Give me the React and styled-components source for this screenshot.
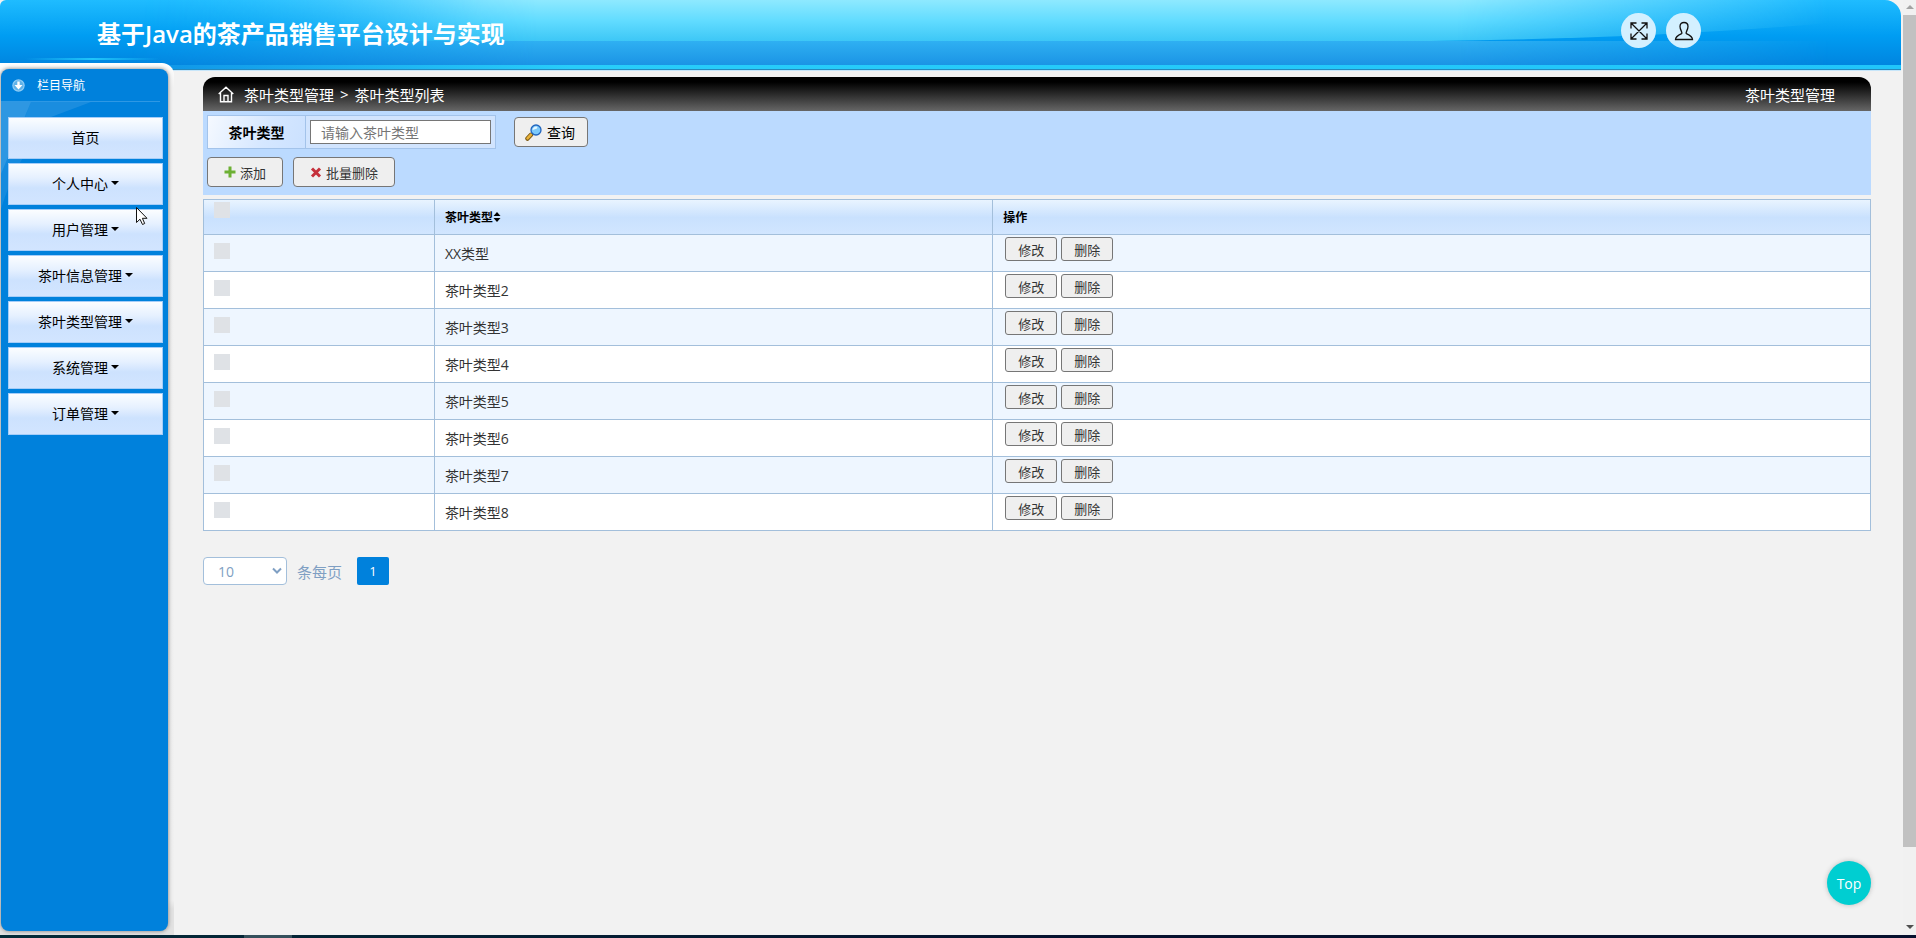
import React from "react";
import styled, { createGlobalStyle, css } from "styled-components";

const GlobalStyle = createGlobalStyle`
  *, *::before, *::after { box-sizing: border-box; }
  body {
    margin: 0;
    background: #f2f2f2;
    color: #000;
    font-family: "Open Sans", "Noto Sans CJK SC", sans-serif;
    font-size: 14px;
  }
  button, input, select { font-family: inherit; margin: 0; }
`;

const Screen = styled.div`
  display: flex;
  flex-direction: column;
  height: 100vh;
`;

const Viewport = styled.div`
  display: flex;
  flex: 1;
  min-height: 0;
`;

const Page = styled.div`
  position: relative;
  display: flex;
  flex-direction: column;
  flex: 1;
  min-width: 0;
`;

const Header = styled.header`
  position: relative;
  display: flex;
  align-items: flex-start;
  justify-content: space-between;
  height: 71px;
  margin-right: 2px;
  padding: 0 200px 0 97px;
  border-radius: 6px 16px 0 0;
  overflow: hidden;
  flex: none;
`;

const HeaderArt = styled.svg`
  position: absolute;
  inset: 0;
  width: 100%;
  height: 100%;
`;

const Title = styled.h1`
  position: relative;
  margin: 0;
  color: #fff;
  font-size: 24px;
  line-height: 68px;
  font-weight: 700;
`;

const Latin = styled.span`
  font-weight: 600;
`;

const HeaderActions = styled.div`
  position: relative;
  display: flex;
  gap: 10px;
  padding-top: 13px;
`;

const RoundButton = styled.button`
  display: flex;
  align-items: center;
  justify-content: center;
  width: 35px;
  height: 35px;
  padding: 0;
  border: 0;
  border-radius: 50%;
  background: #d3f0ff;
  color: #111;
`;

const Body = styled.div`
  display: flex;
  flex: 1;
  min-height: 0;
`;

const SidebarFrame = styled.aside`
  position: relative;
  display: flex;
  width: 174px;
  margin-top: -8px;
  padding: 6px 6px 4px 1px;
  border-radius: 0 12px 0 0;
  background: linear-gradient(#fff, #f2f2f2 24px, #f0f0f0 96%, #e2e2e2 97%);
  flex: none;
`;

const Sidebar = styled.div`
  position: relative;
  flex: 1;
  border-radius: 8px;
  overflow: hidden;
  background: #0081dc;
  box-shadow: 0 0 4px #777;
`;

const SidebarArt = styled.svg`
  position: absolute;
  top: 0;
  left: 0;
`;

const SidebarHeading = styled.h2`
  position: relative;
  display: flex;
  align-items: center;
  gap: 12px;
  height: 33px;
  margin: 0 8px 15px 0;
  padding-left: 11px;
  border-bottom: 1px solid #2e98e4;
  color: #fff;
  font-size: 12px;
  font-weight: 400;
`;

const NavList = styled.ul`
  position: relative;
  display: flex;
  flex-direction: column;
  gap: 4px;
  margin: 0;
  padding: 0 5px 0 7px;
  list-style: none;
`;

const NavButton = styled.button`
  display: flex;
  align-items: center;
  justify-content: center;
  gap: 3px;
  width: 100%;
  height: 42px;
  padding: 0 0 2px;
  border: 1px solid #a5cdf8;
  background: linear-gradient(#fbfdff, #e5f0ff 35%, #cde2fe 60%, #d2e5ff);
  color: #000;
  font-size: 14px;
`;

const Caret = styled.span`
  border: 4px solid transparent;
  border-top-color: currentColor;
  border-bottom: 0;
`;

const Main = styled.main`
  flex: 1;
  min-width: 0;
  padding: 6px 32px 0 29px;
`;

const Breadcrumb = styled.nav`
  display: flex;
  align-items: center;
  gap: 6px;
  height: 34px;
  padding: 0 36px 0 15px;
  border-radius: 12px 12px 0 0;
  background: linear-gradient(#000 15%, #666);
  color: #fff;
  font-size: 15px;

  svg { margin-right: 4px; }
`;

const CrumbLink = styled.a`
  color: inherit;
  text-decoration: none;
`;

const PageName = styled.span`
  margin-left: auto;
`;

const Toolbar = styled.section`
  display: flex;
  flex-direction: column;
  gap: 8px;
  height: 84px;
  padding: 4px;
  background: #bbdaff;
`;

const ToolRow = styled.div`
  display: flex;
  align-items: center;
  gap: ${(p) => p.$gap}px;
`;

const Field = styled.div`
  display: flex;
  height: 34px;
  border: 1px solid #a3c3ea;
  background: #d1e4fe;
`;

const FieldLabel = styled.label`
  display: flex;
  align-items: center;
  justify-content: center;
  width: 98px;
  border-right: 1px solid #a3c3ea;
  background: linear-gradient(110deg, #f5f9ff, #d5e7ff 60%, #cbe1ff);
  font-size: 14px;
  font-weight: 700;
`;

const TextInput = styled.input`
  width: 181px;
  height: 24px;
  margin: 4px;
  padding: 0 10px;
  border: 1px solid #767676;
  border-radius: 0;
  background: #fff;
  font-size: 14px;

  &::placeholder { color: #757575; }
`;

const ToolButton = styled.button`
  display: flex;
  align-items: center;
  justify-content: center;
  gap: ${(p) => (p.$large ? 5 : 4)}px;
  height: 30px;
  padding: 0 ${(p) => (p.$large ? 12 : 16)}px 0 ${(p) => (p.$large ? 10 : 16)}px;
  border: 1px solid #767676;
  border-radius: 4px;
  background: #efefef;
  color: ${(p) => (p.$large ? "#000" : "#333")};
  font-size: ${(p) => (p.$large ? 14 : 13)}px;
`;

const Table = styled.table`
  width: 100%;
  margin-top: 4px;
  border-collapse: collapse;
  table-layout: fixed;
  color: #333;
`;

const cell = css`
  padding: 0 10px;
  border: 1px solid #a3bfdb;
  text-align: left;
`;

const Th = styled.th`
  ${cell}
  height: 35px;
  color: #000;
  font-size: 12px;
  font-weight: 700;
`;

const HeadRow = styled.tr`
  background: linear-gradient(#e9f4ff, #c9e1fe 50%, #d2e6ff);
`;

const Row = styled.tr`
  background: #fff;
  &:nth-child(odd) { background: #eef6ff; }
`;

const Td = styled.td`
  ${cell}
  height: 37px;
`;

const CheckCell = styled.td`
  ${cell}
  padding-top: ${(p) => (p.$head ? 2 : 8)}px;
  vertical-align: top;
`;

const CheckBox = styled.input`
  display: block;
  width: 16px;
  height: 16px;
  appearance: none;
  background: #dfe2e6;
`;

const SortHead = styled.span`
  display: flex;
  align-items: center;
`;

const RowActions = styled.div`
  display: flex;
  gap: 4px;
  padding: 0 2px 8px;
`;

const RowButton = styled.button`
  width: 52px;
  height: 24px;
  padding: 2px 0 0;
  border: 1px solid #767676;
  border-radius: 3px;
  background: #efefef;
  color: #333;
  font-size: 13px;
  line-height: 20px;
`;

const Pager = styled.div`
  display: flex;
  align-items: center;
  gap: 10px;
  margin-top: 26px;
  color: #7f9fc3;
  font-size: 15px;
`;

const SelectWrap = styled.div`
  position: relative;
  display: flex;

  svg {
    position: absolute;
    right: 5px;
    top: 10px;
    pointer-events: none;
  }
`;

const PageSize = styled.select`
  width: 84px;
  height: 28px;
  padding: 0 14px;
  border: 1px solid #a3bfdb;
  border-radius: 4px;
  appearance: none;
  background: #fff;
  color: #7f9fc3;
  font-size: 14px;
`;

const PageButton = styled.button`
  width: 32px;
  height: 28px;
  margin-left: 5px;
  padding: 0;
  border: 0;
  border-radius: 2px;
  background: #0081dc;
  color: #fff;
  font-size: 13px;
`;

const TopButton = styled.button`
  position: absolute;
  right: 32px;
  bottom: 30px;
  width: 44px;
  height: 44px;
  padding: 0;
  border: 0;
  border-radius: 50%;
  background: #00ced1;
  box-shadow: 0 0 5px #bbb;
  color: #fff;
  font-size: 14px;
`;

const ScrollTrack = styled.div`
  display: flex;
  flex-direction: column;
  align-items: center;
  width: 13px;
  padding: 5px 0 6px;
  background: #f1f1f1;
  flex: none;
`;

const ScrollArrow = styled.span`
  border: 4px solid transparent;
  border-${(p) => (p.$up ? "bottom" : "top")}-color: ${(p) => (p.$up ? "#a3a3a3" : "#505050")};
  border-${(p) => (p.$up ? "top" : "bottom")}: 0;
`;

const ScrollThumb = styled.div`
  width: 100%;
  height: 90%;
  margin: 6px 0 auto;
  background: #c1c1c1;
`;

const Taskbar = styled.div`
  height: 3px;
  padding-left: 244px;
  background: linear-gradient(90deg, #032b38, #06102e 60%);
  flex: none;

  &::before {
    content: "";
    display: block;
    width: 48px;
    height: 3px;
    background: #35505c;
  }
`;

const Pointer = styled.svg`
  position: absolute;
  left: 135px;
  top: 206px;
  pointer-events: none;
`;

const HeaderBackground = () => (
  <HeaderArt viewBox="0 0 1901 71" preserveAspectRatio="none" aria-hidden="true">
    <defs>
      <linearGradient id="sky" x1="0" y1="0" x2="0" y2="1">
        <stop offset="0" stopColor="#1fbcff" />
        <stop offset="0.5" stopColor="#009df2" />
        <stop offset="1" stopColor="#0080dc" />
      </linearGradient>
      <linearGradient id="low" x1="0" y1="0" x2="0" y2="1">
        <stop offset="0" stopColor="#2fb0f2" />
        <stop offset="0.8" stopColor="#1b94e5" />
      </linearGradient>
      <linearGradient id="gloss" x1="0" y1="0" x2="0" y2="1">
        <stop offset="0" stopColor="#8ee9ff" />
        <stop offset="0.5" stopColor="#62dcff" />
        <stop offset="1" stopColor="#3dc7f6" />
      </linearGradient>
      <linearGradient id="fade" gradientUnits="userSpaceOnUse" x1="130" y1="0" x2="1830" y2="0">
        <stop offset="0" stopColor="#fff" stopOpacity="0" />
        <stop offset="0.24" stopColor="#fff" />
        <stop offset="0.78" stopColor="#fff" />
        <stop offset="1" stopColor="#fff" stopOpacity="0" />
      </linearGradient>
      <linearGradient id="glossFade" gradientUnits="userSpaceOnUse" x1="130" y1="0" x2="460" y2="90">
        <stop offset="0" stopColor="#fff" stopOpacity="0" />
        <stop offset="1" stopColor="#fff" />
      </linearGradient>
      <linearGradient id="glow" x1="0" y1="0" x2="1" y2="0">
        <stop offset="0" stopColor="#20c5fa" stopOpacity="0" />
        <stop offset="0.5" stopColor="#20c5fa" />
        <stop offset="1" stopColor="#20c5fa" stopOpacity="0" />
      </linearGradient>
      <linearGradient id="edge" x1="0" y1="0" x2="1" y2="0">
        <stop offset="0.09" stopColor="#1098e8" />
        <stop offset="0.3" stopColor="#28cdfa" />
        <stop offset="1" stopColor="#20c5fa" />
      </linearGradient>
      <mask id="sides">
        <rect width="1901" height="71" fill="url(#fade)" />
      </mask>
      <mask id="leftSide">
        <rect width="1901" height="71" fill="url(#glossFade)" />
      </mask>
    </defs>
    <rect width="1901" height="71" fill="url(#sky)" />
    <g mask="url(#sides)">
      <rect y="41" width="1901" height="30" fill="url(#low)" />
      <g mask="url(#leftSide)">
        <path d="M0 0H1901V16Q1700 38 1430 41H0Z" fill="url(#gloss)" />
      </g>
    </g>
    <rect x="25" y="58" width="135" height="2" fill="url(#glow)" />
    <rect y="65" width="1901" height="4" fill="url(#edge)" />
    <rect y="69" width="1901" height="1" fill="#2689bd" />
    <rect y="70" width="1901" height="1" fill="#c7e6fa" />
  </HeaderArt>
);

const ExpandIcon = () => (
  <svg width="18" height="18" viewBox="0 0 18 18" fill="none" stroke="currentColor" strokeWidth="1.3" aria-hidden="true">
    <path d="M1.5 1.5 16.5 16.5M16.5 1.5 1.5 16.5M1 6.500V1H6.500M11.500 1H17V6.500M17 11.500V17H11.500M6.500 17H1V11.500" />
  </svg>
);

const UserIcon = () => (
  <svg width="20" height="20" viewBox="0 0 20 20" fill="none" stroke="currentColor" strokeWidth="1.3" aria-hidden="true">
    <path d="M7.800 12.500C8.500 11 6 9 6 5.500 6 3 7.500 1.500 10 1.500S14 3 14 5.500C14 9 11.500 11 12.200 12.500 15.500 14 18.500 15.300 18.500 18.500H1.500C1.500 15.300 4.500 14 7.800 12.500Z" />
  </svg>
);

const HomeIcon = () => (
  <svg width="16" height="17" viewBox="0 0 16 17" fill="none" stroke="#fff" strokeWidth="1.400" aria-hidden="true">
    <path d="M.7 8 8 1.200 15.300 8M2.500 7V15.800H13.500V7M6 15.500V9.500H10V15.500" />
  </svg>
);

const DownIcon = () => (
  <svg width="13" height="13" viewBox="0 0 13 13" aria-hidden="true">
    <circle cx="6.500" cy="6.500" r="6.200" fill="#8fccf5" />
    <circle cx="6.500" cy="6.500" r="5" fill="#5fb2e8" />
    <path d="M5.300 2.500H7.700V6H10.500L6.500 10.500 2.500 6H5.300Z" fill="#fff" />
  </svg>
);

const SearchIcon = () => (
  <svg width="17" height="17" viewBox="0 0 17 17" aria-hidden="true">
    <path d="M2.500 14.500 6 10.800" stroke="#7d5a13" strokeWidth="4.500" strokeLinecap="round" />
    <path d="M2.500 14.400 6 10.600" stroke="#e8b13a" strokeWidth="2.500" strokeLinecap="round" />
    <circle cx="11" cy="6" r="5" fill="#7cc9fa" stroke="#2264bd" strokeWidth="1.300" />
    <path d="M7.500 6Q8 2.500 11.500 2.500 13 3 12 4.500 10 5 7.500 6Z" fill="#e5f6ff" />
  </svg>
);

const PlusIcon = () => (
  <svg width="12" height="12" viewBox="0 0 12 12" aria-hidden="true">
    <path d="M6 .5V11.500M.5 6H11.500" stroke="#6cb033" strokeWidth="3" />
  </svg>
);

const CrossIcon = () => (
  <svg width="12" height="11" viewBox="0 0 12 11" aria-hidden="true">
    <path d="M2 1.500 10 9.500M10 1.500 2 9.500" stroke="#c5303b" strokeWidth="3" />
  </svg>
);

const SortIcon = () => (
  <svg width="8" height="10" viewBox="0 0 8 10" aria-hidden="true">
    <path d="M4 0 7.500 4H.5ZM4 10 .5 6H7.500Z" />
  </svg>
);

const NAV = [
  ["首页", false],
  ["个人中心", true],
  ["用户管理", true],
  ["茶叶信息管理", true],
  ["茶叶类型管理", true],
  ["系统管理", true],
  ["订单管理", true],
];

const TYPES = ["XX类型", "茶叶类型2", "茶叶类型3", "茶叶类型4", "茶叶类型5", "茶叶类型6", "茶叶类型7", "茶叶类型8"];

export default function App() {
  return (
    <Screen>
      <GlobalStyle />
      <Viewport>
        <Page>
          <Header>
            <HeaderBackground />
            <Title>基于<Latin>Java</Latin>的茶产品销售平台设计与实现</Title>
            <HeaderActions>
              <RoundButton aria-label="全屏"><ExpandIcon /></RoundButton>
              <RoundButton aria-label="用户"><UserIcon /></RoundButton>
            </HeaderActions>
          </Header>
          <Body>
            <SidebarFrame>
              <Sidebar>
                <SidebarArt width="90" height="140" viewBox="0 0 90 140" aria-hidden="true">
                  <path d="M0 33H30L0 105Z" fill="#fff" opacity="0.18" />
                  <path d="M30 33H90L50 48H24Z" fill="#fff" opacity="0.1" />
                  <path d="M0 105 24 48H50Q15 90 0 140Z" fill="#fff" opacity="0.08" />
                </SidebarArt>
                <SidebarHeading><DownIcon />栏目导航</SidebarHeading>
                <NavList>
                  {NAV.map(([name, hasMenu]) => (
                    <li key={name}>
                      <NavButton>{name}{hasMenu && <Caret />}</NavButton>
                    </li>
                  ))}
                </NavList>
              </Sidebar>
            </SidebarFrame>
            <Main>
              <Breadcrumb>
                <HomeIcon />
                <CrumbLink href="#types">茶叶类型管理</CrumbLink>
                <span>&gt;</span>
                <span>茶叶类型列表</span>
                <PageName>茶叶类型管理</PageName>
              </Breadcrumb>
              <Toolbar>
                <ToolRow $gap={18}>
                  <Field>
                    <FieldLabel htmlFor="type">茶叶类型</FieldLabel>
                    <TextInput id="type" placeholder="请输入茶叶类型" />
                  </Field>
                  <ToolButton $large><SearchIcon />查询</ToolButton>
                </ToolRow>
                <ToolRow $gap={10}>
                  <ToolButton><PlusIcon />添加</ToolButton>
                  <ToolButton><CrossIcon />批量删除</ToolButton>
                </ToolRow>
              </Toolbar>
              <Table>
                <colgroup>
                  <col style={{ width: "13.85%" }} />
                  <col style={{ width: "33.5%" }} />
                  <col />
                </colgroup>
                <thead>
                  <HeadRow>
                    <CheckCell $head><CheckBox type="checkbox" aria-label="全选" /></CheckCell>
                    <Th scope="col"><SortHead>茶叶类型<SortIcon /></SortHead></Th>
                    <Th scope="col">操作</Th>
                  </HeadRow>
                </thead>
                <tbody>
                  {TYPES.map((type) => (
                    <Row key={type}>
                      <CheckCell><CheckBox type="checkbox" aria-label={type} /></CheckCell>
                      <Td>{type}</Td>
                      <Td>
                        <RowActions>
                          <RowButton>修改</RowButton>
                          <RowButton>删除</RowButton>
                        </RowActions>
                      </Td>
                    </Row>
                  ))}
                </tbody>
              </Table>
              <Pager>
                <SelectWrap>
                  <PageSize id="page-size" defaultValue="10">
                    <option>10</option>
                    <option>20</option>
                    <option>50</option>
                  </PageSize>
                  <svg width="10" height="8" viewBox="0 0 10 8" fill="none" stroke="#7f9fc3" strokeWidth="2" aria-hidden="true">
                    <path d="M1 1.500 5 5.500 9 1.500" />
                  </svg>
                </SelectWrap>
                <label htmlFor="page-size">条每页</label>
                <PageButton>1</PageButton>
              </Pager>
            </Main>
          </Body>
          <TopButton>Top</TopButton>
          <Pointer width="14" height="20" viewBox="0 0 14 20" aria-hidden="true">
            <path d="M1.500 1.500V16.500L5 13.200 7.500 18.500 9.700 17.500 7.400 12.300H12Z" fill="#fff" stroke="#111" />
          </Pointer>
        </Page>
        <ScrollTrack aria-hidden="true">
          <ScrollArrow $up />
          <ScrollThumb />
          <ScrollArrow />
        </ScrollTrack>
      </Viewport>
      <Taskbar />
    </Screen>
  );
}
